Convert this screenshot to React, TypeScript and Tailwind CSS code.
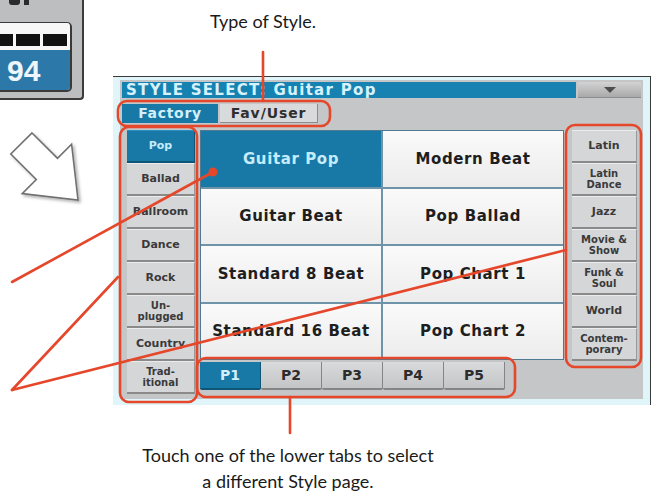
import clsx from 'clsx';

const categoriesLeft = [
  { lines: ['Pop'], active: true },
  { lines: ['Ballad'] },
  { lines: ['Ballroom'] },
  { lines: ['Dance'] },
  { lines: ['Rock'] },
  { lines: ['Un-', 'plugged'] },
  { lines: ['Country'] },
  { lines: ['Trad-', 'itional'] },
];

const categoriesRight = [
  ['Latin'],
  ['Latin', 'Dance'],
  ['Jazz'],
  ['Movie &', 'Show'],
  ['Funk &', 'Soul'],
  ['World'],
  ['Contem-', 'porary'],
];

const styles = [
  'Guitar Pop',
  'Modern Beat',
  'Guitar Beat',
  'Pop Ballad',
  'Standard 8 Beat',
  'Pop Chart 1',
  'Standard 16 Beat',
  'Pop Chart 2',
];

const pages = ['P1', 'P2', 'P3', 'P4', 'P5'];

const screenFont = { fontFamily: '"DejaVu Sans", Verdana, sans-serif' };
const captionFont = { fontFamily: 'Lato, sans-serif' };

function SideButton({ lines, active = false }: { lines: string[]; active?: boolean }) {
  return (
    <div
      className={clsx(
        'flex h-[33px] flex-col items-center justify-center border-t border-b-2 border-r font-bold',
        lines.length > 1 ? 'text-[10px] leading-[11px]' : 'text-[11px] leading-[12px]',
        active
          ? 'border-t-[#2a8fc0] border-b-[#0e5678] border-r-[#0e5678] bg-[#1878a6] text-[#c4ecfb]'
          : 'border-t-[#ececec] border-b-[#8a8a8a] border-r-[#9a9a9a] bg-[#d5d6d8] text-[#3a3a3a]'
      )}
    >
      {lines.map((l) => (
        <span key={l}>{l}</span>
      ))}
    </div>
  );
}

function DeviceCorner() {
  // corner of the front-panel display, cut off by the page edge
  return (
    <div className="absolute left-0 top-0 h-[100px] w-[84px] overflow-hidden rounded-br-[4px] border-b-2 border-r-2 border-[#3c3c3c] bg-[#bdbec0]">
      <div className="flex h-[5px] gap-[4px] pl-[9px]">
        <div className="w-[11px] rounded-b-[3px] bg-[#2b2b2b]" />
        <div className="w-[5px] bg-[#2b2b2b]" />
      </div>
      <div className="mt-[17px] h-[70px] w-[72px] overflow-hidden rounded-br-[5px] rounded-tr-[5px] border-b-2 border-r-2 border-t border-[#3a3a3a]">
        <div className="flex h-[27px] items-end gap-[3px] bg-[#f7f7f7] pb-[4px]">
          <div className="h-[12px] w-[13px] bg-[#111]" />
          <div className="h-[12px] w-[24px] bg-[#111]" />
          <div className="h-[12px] w-[24px] bg-[#111]" />
        </div>
        <div className="flex h-[41px] items-center bg-[#2c78a8] pl-[7px] text-[30px] font-bold leading-none text-[#eef6fb]" style={{ fontFamily: '"Liberation Sans", sans-serif' }}>
          94
        </div>
      </div>
    </div>
  );
}

function Callouts() {
  const red = '#e5472b';
  return (
    <svg className="pointer-events-none absolute left-0 top-0" width={654} height={493} viewBox="0 0 654 493">
      <defs>
        <filter id="arrowShade" x="-20%" y="-20%" width="150%" height="150%">
          <feDropShadow dx="2" dy="2" stdDeviation="1.5" floodColor="#000" floodOpacity="0.3" />
        </filter>
      </defs>
      <polygon
        points="32,133 57.5,158.3 71.6,144.2 78,200 22.2,193.6 36.3,179.5 10.8,154"
        fill="#fff"
        stroke="#707070"
        strokeWidth={1.6}
        filter="url(#arrowShade)"
      />
      <g stroke={red} strokeWidth={2.6} fill="none" strokeLinecap="round">
        <line x1={263} y1={52} x2={263} y2={101} />
        <rect x={118} y={101} width={212} height={25} rx={9} />
        <rect x={120} y={127} width={77} height={275} rx={9} />
        <rect x={566} y={125} width={75} height={242} rx={9} />
        <rect x={197} y={358} width={318} height={39} rx={9} />
        <line x1={290} y1={397} x2={290} y2={433} />
        <line x1={12} y1={282} x2={213} y2={172} />
        <line x1={12} y1={390} x2={118} y2={277} />
        <line x1={12} y1={390} x2={566} y2={250} />
      </g>
      <circle cx={213} cy={172} r={4.5} fill={red} />
    </svg>
  );
}

export default function App() {
  return (
    <div className="relative h-[493px] w-[654px] overflow-hidden bg-white">
      <DeviceCorner />

      <div className="h-[76px] pt-[8px]">
        <p className="w-[526px] text-center text-[18px] leading-[26px] text-[#1a1a1a]" style={captionFont}>
          Type of Style.
        </p>
      </div>

      {/* touch screen */}
      <div className="ml-[113px] h-[329px] w-[538px] border-r border-t border-[#3a3a3a] bg-[#e0f5f9] pb-[6px] pl-[7px] pr-[7px] pt-[3px]" style={screenFont}>
        <div className="flex h-full flex-col bg-[#c5c6c8]">
          <div className="flex h-[18px] gap-[2px] px-[2px] pt-[2px]">
            <div className="flex flex-1 items-center bg-[#1682b2] pl-[4px] text-[15px] font-bold leading-none tracking-[1.3px] text-[#d6f2fc]">
              STYLE SELECT: Guitar Pop
            </div>
            <div className="flex w-[63px] items-center justify-center border-b border-[#8e8e8e] bg-gradient-to-b from-[#d3d3d3] to-[#a9a9a9]">
              <div className="h-0 w-0 border-l-[6px] border-r-[6px] border-t-[6px] border-l-transparent border-r-transparent border-t-[#4d4d4d]" />
            </div>
          </div>

          <div className="mt-[6px] flex h-[19px] gap-[2px] px-[2px]">
            <div className="flex w-[96px] items-center justify-center bg-[#1878a6] text-[14px] font-bold tracking-[0.7px] text-[#d2f0fb]">
              Factory
            </div>
            <div className="flex w-[98px] items-center justify-center border-b border-r border-[#8d8d8d] bg-[#d9dadc] text-[14px] font-bold tracking-[0.9px] text-[#2f2f2f]">
              Fav/User
            </div>
          </div>

          <div className="mt-[7px] flex pl-[7px]">
            <div className="flex w-[68px] flex-col">
              {categoriesLeft.map((c) => (
                <SideButton key={c.lines.join('')} lines={c.lines} active={c.active} />
              ))}
            </div>

            <div className="ml-[5px] w-[364px]">
              <div className="grid h-[230px] grid-cols-2 grid-rows-4 gap-[2px] border border-[#4f7a93] bg-[#6f93a8]">
                {styles.map((s, i) => (
                  <div
                    key={s}
                    className={clsx(
                      'flex items-center justify-center text-[15px] font-bold tracking-[0.6px]',
                      i === 0 ? 'bg-[#1878a6] text-[#c4ecfb]' : 'bg-gradient-to-b from-[#fafafa] to-[#ececec] text-[#1e1e1e]'
                    )}
                  >
                    {s}
                  </div>
                ))}
              </div>
              <div className="mt-[2px] flex h-[28px]">
                {pages.map((p, i) => (
                  <div
                    key={p}
                    className={clsx(
                      'flex w-[61px] items-center justify-center rounded-b-[2px] border-b-2 border-r text-[14px] font-bold',
                      i === 0
                        ? 'border-[#0e5678] bg-[#1878a6] text-[#d2f0fb]'
                        : 'border-[#858585] bg-gradient-to-b from-[#d9dadc] to-[#c4c5c7] text-[#2c2c2c]'
                    )}
                  >
                    {p}
                  </div>
                ))}
              </div>
            </div>

            <div className="ml-[8px] flex w-[65px] flex-col">
              {categoriesRight.map((lines) => (
                <SideButton key={lines.join('')} lines={lines} />
              ))}
            </div>
          </div>
        </div>
      </div>

      <div className="mt-[37px] w-[576px] text-center text-[18px] leading-[26px] text-[#1a1a1a]" style={captionFont}>
        <p>Touch one of the lower tabs to select</p>
        <p>a different Style page.</p>
      </div>

      <Callouts />
    </div>
  );
}
